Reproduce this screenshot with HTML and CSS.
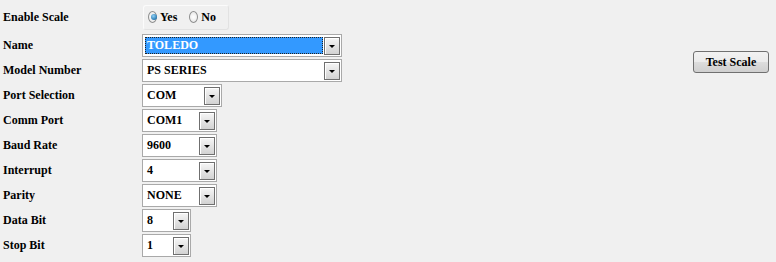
FILE: index.html
```html
<!DOCTYPE html>
<html>
<head>
  <title>Scale Settings</title>
  <link rel="stylesheet" href="styles.css">
</head>
<body>
  <div id="main">

    <div id="settings">
      <div class="row first">
        <div class="label">Enable Scale</div>
        <div class="radios">
          <span class="radio checked"></span><span class="rlabel">Yes</span>
          <span class="radio"></span><span class="rlabel">No</span>
        </div>
      </div>

      <div class="row">
        <div class="label">Name</div>
        <div class="select wide"><div class="value selected">TOLEDO</div><div class="arrow"></div></div>
      </div>
      <div class="row">
        <div class="label">Model Number</div>
        <div class="select wide"><div class="value">PS SERIES</div><div class="arrow"></div></div>
      </div>
      <div class="row">
        <div class="label">Port Selection</div>
        <div class="select port"><div class="value">COM</div><div class="arrow"></div></div>
      </div>
      <div class="row">
        <div class="label">Comm Port</div>
        <div class="select mid"><div class="value">COM1</div><div class="arrow"></div></div>
      </div>
      <div class="row">
        <div class="label">Baud Rate</div>
        <div class="select mid"><div class="value">9600</div><div class="arrow"></div></div>
      </div>
      <div class="row">
        <div class="label">Interrupt</div>
        <div class="select mid"><div class="value">4</div><div class="arrow"></div></div>
      </div>
      <div class="row">
        <div class="label">Parity</div>
        <div class="select mid"><div class="value">NONE</div><div class="arrow"></div></div>
      </div>
      <div class="row">
        <div class="label">Data Bit</div>
        <div class="select small"><div class="value">8</div><div class="arrow"></div></div>
      </div>
      <div class="row">
        <div class="label">Stop Bit</div>
        <div class="select small"><div class="value">1</div><div class="arrow"></div></div>
      </div>
    </div>

    <div id="side">
      <button class="btn">Test Scale</button>
    </div>

  </div>
</body>
</html>
```

FILE: styles.css
```css
*{
  padding: 0;
  margin: 0;
  box-sizing: border-box;
}

body{
  background-color: #f0f0f0;
  font-family: "Liberation Serif", "Times New Roman", serif;
  font-size: 12px;
  font-weight: bold;
  color: #000;
}

#main{
  display: flex;
  width: 776px;
  height: 262px;
}

#settings{
  padding-top: 5px;
  padding-left: 3px;
}

.row{
  display: flex;
  align-items: center;
  height: 23px;
  margin-bottom: 2px;
}

.row.first{
  height: 24px;
  margin-bottom: 5px;
}

.label{
  width: 139px;
}

/* radio group */
.radios{
  display: flex;
  align-items: center;
  height: 25px;
  width: 86px;
  margin-left: 1px;
  padding-left: 4px;
  border: 1px solid #fbfbfb;
  border-right-color: #e2e2e2;
  border-bottom-color: #e2e2e2;
  border-radius: 3px;
}

.radio{
  width: 12px;
  height: 12px;
  border-radius: 50%;
  border: 1px solid #8e8f8f;
  background: radial-gradient(circle at 50% 50%, #fff 0, #e4e4e4 100%);
  position: relative;
}

.radio.checked::after{
  content: "";
  position: absolute;
  left: 2px;
  top: 2px;
  width: 6px;
  height: 6px;
  border-radius: 50%;
  background: radial-gradient(circle at 40% 35%, #8fd0f5 0, #1b6ea8 80%);
}

.rlabel{
  margin-left: 3px;
  margin-right: 12px;
}

/* combo boxes */
.select{
  display: flex;
  align-items: center;
  height: 23px;
  background-color: #fff;
  border: 1px solid #a9a9a9;
  padding: 2px 1px 2px 2px;
}

.wide{ width: 200px; }
.port{ width: 80px; }
.mid{ width: 75px; }
.small{ width: 49px; }

.value{
  flex: 1;
  height: 17px;
  line-height: 17px;
  padding-left: 2px;
  white-space: nowrap;
  overflow: hidden;
}

.value.selected{
  background-color: #3399ff;
  color: #fff;
  outline: 1px dotted #222;
  outline-offset: -1px;
}

.port .value, .mid .value{
  margin-right: 2px;
}

.arrow{
  width: 16px;
  height: 18px;
  border: 1px solid #6f6f6f;
  background: linear-gradient(#f6f6f6, #d2d2d2);
  box-shadow: inset 1px 1px 0 #fff;
  position: relative;
  margin-left: 1px;
}

.arrow::after{
  content: "";
  position: absolute;
  left: 4px;
  top: 7px;
  border-left: 3px solid transparent;
  border-right: 3px solid transparent;
  border-top: 3px solid #000;
}

/* button */
#side{
  margin-left: auto;
  padding-top: 51px;
  padding-right: 7px;
}

.btn{
  width: 76px;
  height: 22px;
  font-family: "Liberation Serif", "Times New Roman", serif;
  font-size: 12px;
  font-weight: bold;
  color: #000;
  border: 1px solid #707070;
  border-radius: 3px;
  background: linear-gradient(#f2f2f2 0, #ebebeb 50%, #dddddd 51%, #cfcfcf 100%);
}
```
